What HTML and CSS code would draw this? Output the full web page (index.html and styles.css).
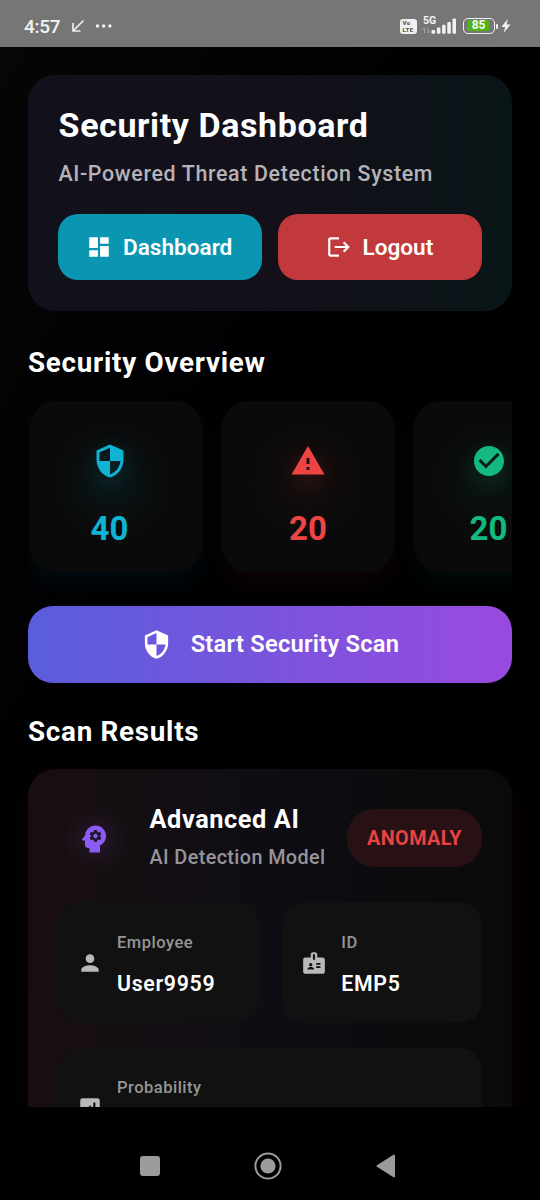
FILE: index.html
```html
<!DOCTYPE html>
<html lang="en">
<head>
<meta charset="utf-8">
<title>Security Dashboard</title>
<link rel="stylesheet" href="styles.css">
</head>
<body>
<div class="status-bar">
  <span class="clock">4:57</span>
  <svg class="status-arrow" width="14" height="14" viewBox="0 0 14 14"><path d="M12.5 1.5L2.4 11.6M2 4V12H9.5" fill="none" stroke="#ececec" stroke-width="1.7"/></svg>
  <svg class="status-dots" width="18" height="6" viewBox="0 0 18 6" fill="#f2f2f2"><circle cx="2.5" cy="3" r="1.7"/><circle cx="8.7" cy="3" r="1.7"/><circle cx="14.9" cy="3" r="1.7"/></svg>
  <span class="volte"><span>Vo</span><span>LTE</span></span>
  <span class="signal">
    <span class="network">5G</span>
    <svg width="34" height="18" viewBox="0 0 34 18" fill="#f2f2f2"><path d="M2.5 16V11M.8 12.7l1.7-1.9M6 11v5M7.7 14.2L6 16.1" stroke="#a8a8a8" stroke-width="1" fill="none"/><rect x="9.5" y="13" width="3.6" height="3.7" rx="1"/><rect x="14.9" y="10.5" width="3.5" height="6.2" rx="1"/><rect x="20.1" y="7.8" width="3.5" height="8.9" rx="1"/><rect x="25.3" y="5" width="3.5" height="11.7" rx="1"/><rect x="30.5" y="1.5" width="3.5" height="15.2" rx="1"/></svg>
  </span>
  <span class="battery"><span class="battery-level">85</span></span>
  <span class="battery-tip"></span>
  <svg class="bolt" width="10" height="14" viewBox="0 0 10 14"><path d="M6.6 0L.4 8.1h3.8L2.6 14 9.6 5.6H5.7z" fill="#f2f2f2"/></svg>
</div>

<main class="screen">
  <section class="hero">
    <h1 class="hero-title">Security Dashboard</h1>
    <p class="hero-subtitle">AI-Powered Threat Detection System</p>
    <div class="hero-actions">
      <button class="action action-dashboard">
        <svg width="26" height="26" viewBox="0 0 24 24" fill="#fff"><path d="M3 13h8V3H3v10zm0 8h8v-6H3v6zm10 0h8V11h-8v10zm0-18v6h8V3h-8z"/></svg>
        <span>Dashboard</span>
      </button>
      <button class="action action-logout">
        <svg width="26" height="26" viewBox="0 0 24 24" fill="#fff"><path d="M17 7l-1.41 1.41L18.17 11H8v2h10.17l-2.58 2.58L17 17l5-5zM4 5h8V3H4c-1.1 0-2 .9-2 2v14c0 1.1.9 2 2 2h8v-2H4V5z"/></svg>
        <span>Logout</span>
      </button>
    </div>
  </section>

  <h2 class="section-title overview-title">Security Overview</h2>
  <div class="stats">
    <article class="stat stat-total">
      <svg class="stat-icon" width="36" height="36" viewBox="0 0 24 24"><path d="M12 1L3 5v6c0 5.55 3.84 10.74 9 12 5.16-1.26 9-6.45 9-12V5l-9-4zm0 10.99h7c-.53 4.12-3.28 7.79-7 8.94V12H5V6.3l7-3.11v8.8z"/></svg>
      <span class="stat-value">40</span>
    </article>
    <article class="stat stat-threats">
      <svg class="stat-icon" width="36" height="36" viewBox="0 0 24 24"><path d="M1 21h22L12 2 1 21zm12-3h-2v-2h2v2zm0-4h-2v-4h2v4z"/></svg>
      <span class="stat-value">20</span>
    </article>
    <article class="stat stat-safe">
      <svg class="stat-icon" width="36" height="36" viewBox="0 0 24 24"><path d="M12 2C6.48 2 2 6.48 2 12s4.48 10 10 10 10-4.48 10-10S17.52 2 12 2zm-2 15l-5-5 1.41-1.41L10 14.17l7.59-7.59L19 8l-9 9z"/></svg>
      <span class="stat-value">20</span>
    </article>
  </div>

  <button class="scan">
    <svg width="31" height="31" viewBox="0 0 24 24" fill="#fff"><path d="M12 1L3 5v6c0 5.55 3.84 10.74 9 12 5.16-1.26 9-6.45 9-12V5l-9-4zm0 10.99h7c-.53 4.12-3.28 7.79-7 8.94V12H5V6.3l7-3.11v8.8z"/></svg>
    <span>Start Security Scan</span>
  </button>

  <h2 class="section-title results-title">Scan Results</h2>
  <section class="result">
    <header class="result-head">
      <span class="model-icon">
        <svg width="36" height="36" viewBox="0 0 24 24" fill="#8b5cf6"><path d="M13 8.57c-.79 0-1.43.64-1.43 1.43s.64 1.43 1.43 1.43 1.43-.64 1.43-1.43-.64-1.43-1.43-1.43z"/><path d="M13 3C9.25 3 6.2 5.94 6.02 9.64L4.1 12.2c-.25.33-.01.8.4.8H6v3c0 1.1.9 2 2 2h1v3h7v-4.68c2.36-1.12 4-3.53 4-6.32 0-3.87-3.13-7-7-7zm3 7c0 .13-.01.26-.02.39l.83.66c.08.06.1.16.05.25l-.8 1.39c-.05.09-.16.12-.24.09l-.99-.4c-.21.16-.43.29-.67.39L14 13.83c-.01.1-.1.17-.2.17h-1.6c-.1 0-.18-.07-.2-.17l-.15-1.06c-.25-.1-.47-.23-.68-.39l-.99.4c-.09.03-.2 0-.25-.09l-.8-1.39c-.05-.08-.03-.19.05-.25l.84-.66c-.01-.13-.02-.26-.02-.39s.02-.27.04-.39l-.85-.66c-.08-.06-.1-.16-.05-.26l.8-1.38c.05-.09.15-.12.24-.09l1 .4c.2-.15.43-.29.67-.39L12 6.17c.02-.1.1-.17.2-.17h1.6c.1 0 .18.07.2.17l.15 1.06c.24.1.46.23.67.39l1-.4c.09-.03.2 0 .24.09l.8 1.38c.05.09.03.2-.05.26l-.85.66c.03.12.04.25.04.39z"/></svg>
      </span>
      <div class="model">
        <h3 class="model-name">Advanced AI</h3>
        <p class="model-kind">AI Detection Model</p>
      </div>
      <span class="verdict">ANOMALY</span>
    </header>
    <div class="facts">
      <div class="fact">
        <svg width="26" height="26" viewBox="0 0 24 24" fill="#b9b9b9"><path d="M12 12c2.21 0 4-1.79 4-4s-1.79-4-4-4-4 1.79-4 4 1.79 4 4 4zm0 2c-2.67 0-8 1.34-8 4v2h16v-2c0-2.66-5.33-4-8-4z"/></svg>
        <div><p class="fact-label">Employee</p><p class="fact-value">User9959</p></div>
      </div>
      <div class="fact">
        <svg width="26" height="26" viewBox="0 0 24 24" fill="#b9b9b9"><path d="M20 7h-5V4c0-1.1-.9-2-2-2h-2c-1.1 0-2 .9-2 2v3H4c-1.1 0-2 .9-2 2v11c0 1.1.9 2 2 2h16c1.1 0 2-.9 2-2V9c0-1.1-.9-2-2-2zM9 12c.83 0 1.5.67 1.5 1.5S9.83 15 9 15s-1.5-.67-1.5-1.5S8.17 12 9 12zm3 6H6v-.75c0-1 2-1.5 3-1.5s3 .5 3 1.5V18zm1-9h-2V4h2v5zm5 7.5h-4V15h4v1.5zm0-3h-4V12h4v1.5z"/></svg>
        <div><p class="fact-label">ID</p><p class="fact-value">EMP5</p></div>
      </div>
      <div class="fact fact-wide">
        <svg width="26" height="26" viewBox="0 0 24 24" fill="#b9b9b9"><path d="M19 3H5c-1.1 0-2 .9-2 2v14c0 1.1.9 2 2 2h14c1.1 0 2-.9 2-2V5c0-1.1-.9-2-2-2zM9 17H7v-5h2v5zm4 0h-2v-3h2v3zm0-5h-2v-2h2v2zm4 5h-2V7h2v10z"/></svg>
        <div><p class="fact-label">Probability</p></div>
      </div>
    </div>
  </section>
</main>

<nav class="nav-bar">
  <svg width="20" height="20" viewBox="0 0 20 20"><rect width="20" height="20" rx="3" fill="#9b9b9b"/></svg>
  <svg width="28" height="28" viewBox="0 0 28 28"><circle cx="14" cy="14" r="12.6" fill="none" stroke="#9b9b9b" stroke-width="2"/><circle cx="14" cy="14" r="7.6" fill="#9b9b9b"/></svg>
  <svg width="20" height="24" viewBox="0 0 20 24"><path d="M1.5 12L18 1.5v21z" fill="#9b9b9b" stroke="#9b9b9b" stroke-width="2" stroke-linejoin="round"/></svg>
</nav>
</body>
</html>
```

FILE: styles.css
```css
* { box-sizing: border-box; margin: 0; padding: 0; }

body {
  width: 540px;
  height: 1200px;
  overflow: hidden;
  display: flex;
  flex-direction: column;
  background: #000;
  color: #fff;
  font-family: Roboto, "Liberation Sans", sans-serif;
}

button { border: 0; color: inherit; font: inherit; }
svg { display: block; flex: none; }

/* Status bar */
.status-bar {
  flex: none;
  height: 47px;
  padding: 5px 29px 0 24px;
  display: flex;
  align-items: center;
  background: #767676;
  color: #f4f4f4;
}
.clock { width: 47px; font-size: 19px; font-weight: 500; letter-spacing: -0.3px; }
.status-dots { margin-left: 10px; }
.volte {
  margin-left: auto;
  width: 17px;
  height: 15px;
  border-radius: 3px;
  background: #f0f0f0;
  color: #5c5c5c;
  font-size: 6px;
  font-weight: 900;
  line-height: 7px;
  letter-spacing: 0.4px;
  display: flex;
  flex-direction: column;
  justify-content: center;
  padding-left: 2.5px;
}
.signal { position: relative; margin-left: 5px; }
.network { position: absolute; left: 1px; top: -1px; font-size: 10.5px; font-weight: 700; line-height: 10px; }
.battery {
  margin-left: 7px;
  width: 32px;
  height: 16px;
  padding: 1px 1.5px;
  border: 1.5px solid #f0f0f0;
  border-radius: 5px;
}
.battery-level {
  display: block;
  width: 22px;
  height: 11px;
  margin-left: 1px;
  border-radius: 2px;
  background: #50b414;
  font-size: 12px;
  font-weight: 700;
  line-height: 11px;
  text-align: right;
  padding-right: 3px;
}
.battery-tip { width: 2px; height: 5px; margin-left: 1px; border-radius: 1px; background: #f0f0f0; }
.bolt { margin-left: 3px; }

/* Scrollable screen */
.screen {
  flex: 1;
  min-height: 0;
  overflow: hidden;
  padding: 27.5px 28px 0;
  background: linear-gradient(120deg, #060606 0%, #010103 35%, #000 60%);
}

.hero {
  height: 236.5px;
  padding: 30px;
  border-radius: 27.5px;
  background: linear-gradient(90deg, #11111c 0%, #14101a 50%, #0e1218 76%, #081517 100%);
}
.hero-title { padding-left: 0.6px; font-size: 34px; font-weight: 700; line-height: 41px; letter-spacing: 0.6px; }
.hero-subtitle { margin-top: 14px; padding-left: 0.4px; color: #b4b3b7; font-size: 21.4px; font-weight: 500; line-height: 28px; letter-spacing: 0.65px; }
.hero-actions { display: flex; gap: 16.5px; margin-top: 26.5px; }
.action {
  flex: 1;
  height: 66px;
  display: flex;
  align-items: center;
  justify-content: center;
  gap: 10.5px;
  border-radius: 20px;
  font-size: 22.6px;
  font-weight: 600;
}
.action-dashboard { background: #0a95b1; }
.action-logout { background: #c2393c; }
.action svg { margin-left: -1px; }

.section-title { font-size: 27.8px; font-weight: 700; line-height: 38px; letter-spacing: 0.72px; }
.overview-title { margin-top: 33px; }

/* Overview cards */
.stats {
  height: 223.5px;
  padding: 19px 0 33px 2px;
  display: flex;
  gap: 20px;
  overflow: hidden;
}
.stat {
  flex: none;
  width: 172px;
  height: 171px;
  padding-top: 42px;
  display: flex;
  flex-direction: column;
  align-items: center;
  border-radius: 27px;
  color: var(--tone);
  background: radial-gradient(circle 58px at var(--glow-x) 80px, var(--glow), transparent), #0a0a0a;
  box-shadow: 0 11px 24px var(--shadow);
}
.stat-total { --tone: #0fb4d5; --glow: #06b6d412; --shadow: #06b6d410; --halo: #06b6d438; --glow-x: 82px; padding-right: 13px; }
.stat-threats { --tone: #ef4444; --glow: #ef44440c; --shadow: #ef444410; --halo: #ef444438; --glow-x: 86px; }
.stat-safe { --tone: #13b981; --glow: #10b9810e; --shadow: #10b98110; --halo: #10b98138; --glow-x: 77px; padding-right: 23px; }
.stat-icon { fill: var(--tone); filter: drop-shadow(0 6px 12px var(--halo)); }
.stat-value { margin-top: 30px; font-size: 33px; font-weight: 700; line-height: 40px; }

.scan {
  width: 100%;
  height: 77px;
  display: flex;
  align-items: center;
  justify-content: center;
  gap: 19px;
  border-radius: 25px;
  background: linear-gradient(90deg, #5a5edc, #994ade);
  font-size: 23.7px;
  font-weight: 600;
  letter-spacing: 0.25px;
}

.results-title { margin-top: 30.5px; }

/* Result card */
.result {
  height: 460px;
  margin-top: 18px;
  padding: 35px 30px;
  border-radius: 27.5px;
  background: linear-gradient(90deg, #190e0f 0%, #120e13 30%, #0e0d14 52%, #0b0b0d 80%, #0a0a0a 100%);
  box-shadow: 0 11px 28px #ef444410;
}
.result-head { display: flex; align-items: center; height: 65px; }
.model-icon {
  flex: none;
  width: 74px;
  height: 74px;
  display: grid;
  place-items: center;
  padding: 5px 2px 0 0;
  background: radial-gradient(circle 33px at 50% 53%, #8b5cf61e, transparent);
}
.model { flex: 1; margin-left: 17.5px; padding-top: 2px; white-space: nowrap; }
.model-name { font-size: 25.3px; font-weight: 700; line-height: 30px; letter-spacing: 0.6px; }
.model-kind { margin-top: 11px; color: #96949a; font-size: 19.8px; font-weight: 500; line-height: 24px; letter-spacing: 0.4px; }
.verdict {
  flex: none;
  width: 135px;
  height: 58px;
  margin-top: 3px;
  padding-top: 1px;
  border-radius: 27.5px;
  background: #271115;
  color: #e84343;
  font-size: 19.8px;
  font-weight: 700;
  line-height: 58px;
  letter-spacing: 0.4px;
  text-align: center;
}

.facts { display: grid; grid-template-columns: 1fr 1fr; gap: 24.5px; margin-top: 33px; }
.fact {
  height: 121px;
  padding-left: 19px;
  display: flex;
  align-items: center;
  gap: 14px;
  border-radius: 22px;
  background: #111;
}
.fact > div { padding-top: 3.5px; }
.fact-wide { grid-column: 1 / -1; }
.fact-wide > div { align-self: flex-start; padding-top: 28px; }
.fact-label { color: #969696; font-size: 16.5px; font-weight: 500; line-height: 23px; letter-spacing: 0.5px; }
.fact-value { margin-top: 16px; font-size: 21.3px; font-weight: 600; line-height: 28px; letter-spacing: 0.7px; }

/* System navigation */
.nav-bar {
  flex: none;
  height: 93px;
  padding: 25px 144px 0 140px;
  display: flex;
  align-items: center;
  justify-content: space-between;
  background: #000;
}
```
